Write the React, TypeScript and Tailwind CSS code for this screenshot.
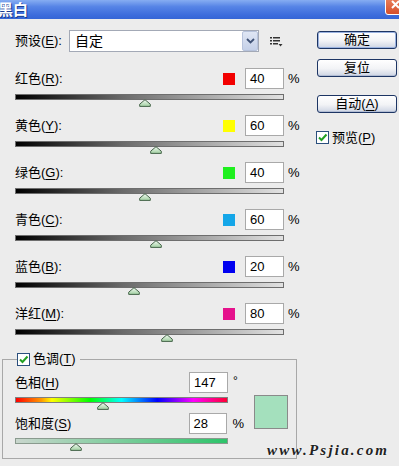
import React from "react";

const FONT = "font-['Liberation_Sans','Noto_Sans_CJK_SC',sans-serif]";

function U({ children }: { children: React.ReactNode }) {
  return <span className="underline underline-offset-2">{children}</span>;
}

function Thumb({ left }: { left: number }) {
  return (
    <svg
      className="absolute top-full"
      style={{ left: left - 6 }}
      width="12"
      height="8"
      viewBox="0 0 12 8"
    >
      <defs>
        <linearGradient id="tg" x1="0" y1="0" x2="0" y2="1">
          <stop offset="0" stopColor="#f4fbf4" />
          <stop offset="1" stopColor="#9fcf9f" />
        </linearGradient>
      </defs>
      <path d="M6 0.7 L11.3 5.2 L11.3 7.4 L0.7 7.4 L0.7 5.2 Z" fill="url(#tg)" stroke="#46644a" strokeWidth="1" />
    </svg>
  );
}

function Check() {
  return (
    <div className="w-[13px] h-[13px] border border-[#2a4f7d] bg-white flex items-center justify-center">
      <svg width="11" height="11" viewBox="0 0 11 11">
        <path d="M2 5.5 L4.5 8 L9.5 2.5" fill="none" stroke="#22a022" strokeWidth="2" />
      </svg>
    </div>
  );
}

function Btn({ children, def, className }: { children: React.ReactNode; def?: boolean; className?: string }) {
  return (
    <div
      className={
        "h-[18px] w-[80px] rounded-[3px] border border-[#1d3564] flex items-center justify-center text-[13px] leading-[18px] text-black bg-[linear-gradient(to_bottom,#ffffff,#f2f3f6_55%,#cdd4e3)] " +
        (def ? "shadow-[inset_0_0_0_1px_#9ab2e0] " : "shadow-[inset_0_-1px_0_#b2bdd4] ") +
        (className ?? "")
      }
    >
      {children}
    </div>
  );
}

type Row = { label: React.ReactNode; swatch: string; value: number };

const rows: Row[] = [
  { label: <>红色(<U>R</U>):</>, swatch: "bg-[#f20000]", value: 40 },
  { label: <>黄色(<U>Y</U>):</>, swatch: "bg-[#ffff00]", value: 60 },
  { label: <>绿色(<U>G</U>):</>, swatch: "bg-[#1ef01e]", value: 40 },
  { label: <>青色(<U>C</U>):</>, swatch: "bg-[#14a6e8]", value: 60 },
  { label: <>蓝色(<U>B</U>):</>, swatch: "bg-[#0000f0]", value: 20 },
  { label: <>洋红(<U>M</U>):</>, swatch: "bg-[#e5128c]", value: 80 },
];

function SliderRow({ r }: { r: Row }) {
  const pos = ((r.value + 200) / 500) * 269;
  return (
    <div className="h-[47px]">
      <div className="flex items-center h-[21px]">
        <span className="flex-1">{r.label}</span>
        <div className={"w-[12px] h-[12px] " + r.swatch} />
        <div className="ml-[10px] w-[39px] h-[21px] bg-white border border-[#a9a9a9] pl-[4px] flex items-center text-[13px]">
          {r.value}
        </div>
        <span className="ml-[4px] w-[12px] text-[13px]">%</span>
      </div>
      <div className="relative mt-[5px] w-[269px] h-[6px] border border-[#6e6e6e] bg-[linear-gradient(to_right,#000000,#6a6a6a_40%,#e2e2e2)]">
        <Thumb left={pos} />
      </div>
    </div>
  );
}

export default function App() {
  return (
    <div className={"relative w-[399px] h-[466px] overflow-hidden bg-[#ececec] text-[13px] text-black " + FONT}>
      {/* Title bar */}
      <div className="h-[19px] bg-[linear-gradient(to_bottom,#86adf2,#5684e6_35%,#3c6cdc_80%,#3566d6)] flex items-center">
        <span className="-ml-[2px] text-[15px] font-bold text-white leading-[19px] [text-shadow:1px_1px_0_#1b3c8c]">
          黑白
        </span>
      </div>
      <div className="absolute top-[-6px] left-[385px] w-[21px] h-[21px] rounded-[3px] border border-white bg-[linear-gradient(to_bottom,#ee8a66,#d6502c)] flex items-center justify-center">
        <svg width="9" height="9" viewBox="0 0 9 9">
          <path d="M1 1 L8 8 M8 1 L1 8" stroke="#ffffff" strokeWidth="2" />
        </svg>
      </div>

      {/* Top section */}
      <div className="flex">
        <div className="w-[300px] pl-[15px] pt-[11px]">
          <div className="flex items-center h-[22px]">
            <span className="w-[54px]">预设(<U>E</U>):</span>
            <div className="w-[190px] h-[22px] bg-white border border-[#a3a9b6] flex items-center">
              <span className="flex-1 pl-[5px] text-[14px]">自定</span>
              <div className="w-[16px] h-[20px] rounded-[2px] border border-[#b7c3dc] bg-[linear-gradient(to_bottom,#dfe6f4,#c4d0e8)] flex items-center justify-center">
                <svg width="9" height="6" viewBox="0 0 9 6">
                  <path d="M1 1 L4.5 4.5 L8 1" fill="none" stroke="#3f5276" strokeWidth="1.8" />
                </svg>
              </div>
            </div>
            <svg className="ml-[11px]" width="13" height="11" viewBox="0 0 13 11">
              <rect x="0" y="1" width="2" height="1.5" fill="#333" />
              <rect x="3" y="1" width="7" height="1.5" fill="#333" />
              <rect x="0" y="4" width="2" height="1.5" fill="#333" />
              <rect x="3" y="4" width="7" height="1.5" fill="#333" />
              <rect x="0" y="7" width="2" height="1.5" fill="#333" />
              <rect x="3" y="7" width="5" height="1.5" fill="#333" />
              <path d="M8.5 8 L12.5 8 L10.5 10.5 Z" fill="#333" />
            </svg>
          </div>
          <div className="mt-[16px]">
            {rows.map((r, i) => (
              <SliderRow key={i} r={r} />
            ))}
          </div>
        </div>
        <div className="ml-[17px] pt-[12px] flex flex-col">
          <Btn def>确定</Btn>
          <Btn className="mt-[10px]">复位</Btn>
          <Btn className="mt-[18px]">
            <span>自动(<U>A</U>)</span>
          </Btn>
          <div className="mt-[15px] -ml-[1px] flex items-center gap-[3px]">
            <Check />
            <span>预览(<U>P</U>)</span>
          </div>
        </div>
      </div>

      {/* Tint group */}
      <div className="relative mt-[9px] ml-[2px] w-[295px] h-[100px] border border-[#a8a8a8]">
        <div className="absolute left-[14px] top-[-8px] bg-[#ececec] pr-[4px] flex items-center gap-[3px] h-[14px]">
          <Check />
          <span>色调(<U>T</U>)</span>
        </div>
        <div className="pt-[12px] pl-[12px] flex">
          <div className="w-[229px]">
            <div className="flex items-center h-[21px]">
              <span className="w-[174px]">色相(<U>H</U>)</span>
              <div className="w-[39px] h-[21px] bg-white border border-[#a9a9a9] pl-[4px] flex items-center">147</div>
              <span className="ml-[5px] text-[12px] -mt-[4px]">°</span>
            </div>
            <div className="relative mt-[4px] w-[213px] h-[6px] border border-[#808080] bg-[linear-gradient(to_right,#ff0000,#ff9900_12%,#ffff00_17%,#00ff00_35%,#00ffff_50%,#0000ff_67%,#ff00ff_84%,#ff0033)]">
              <Thumb left={(147 / 360) * 213} />
            </div>
            <div className="flex items-center h-[21px] mt-[10px]">
              <span className="w-[174px]">饱和度(<U>S</U>)</span>
              <div className="w-[39px] h-[21px] bg-white border border-[#a9a9a9] pl-[4px] flex items-center">28</div>
              <span className="ml-[5px]">%</span>
            </div>
            <div className="relative mt-[4px] w-[213px] h-[6px] border border-[#8a9a8e] bg-[linear-gradient(to_right,#c9d6cd,#2dc46a)]">
              <Thumb left={0.28 * 213} />
            </div>
          </div>
          <div className="ml-[10px] mt-[23px] w-[34px] h-[34px] bg-[#a4e0bd] border border-[#8a8a8a]" />
        </div>
      </div>

      <div className="absolute left-[267px] top-[439px] font-['Liberation_Serif',serif] italic font-bold text-[15px] tracking-[2.2px] text-[#222] [text-shadow:0_0_2px_#ffffff]">
        www.Psjia.com
      </div>
    </div>
  );
}
